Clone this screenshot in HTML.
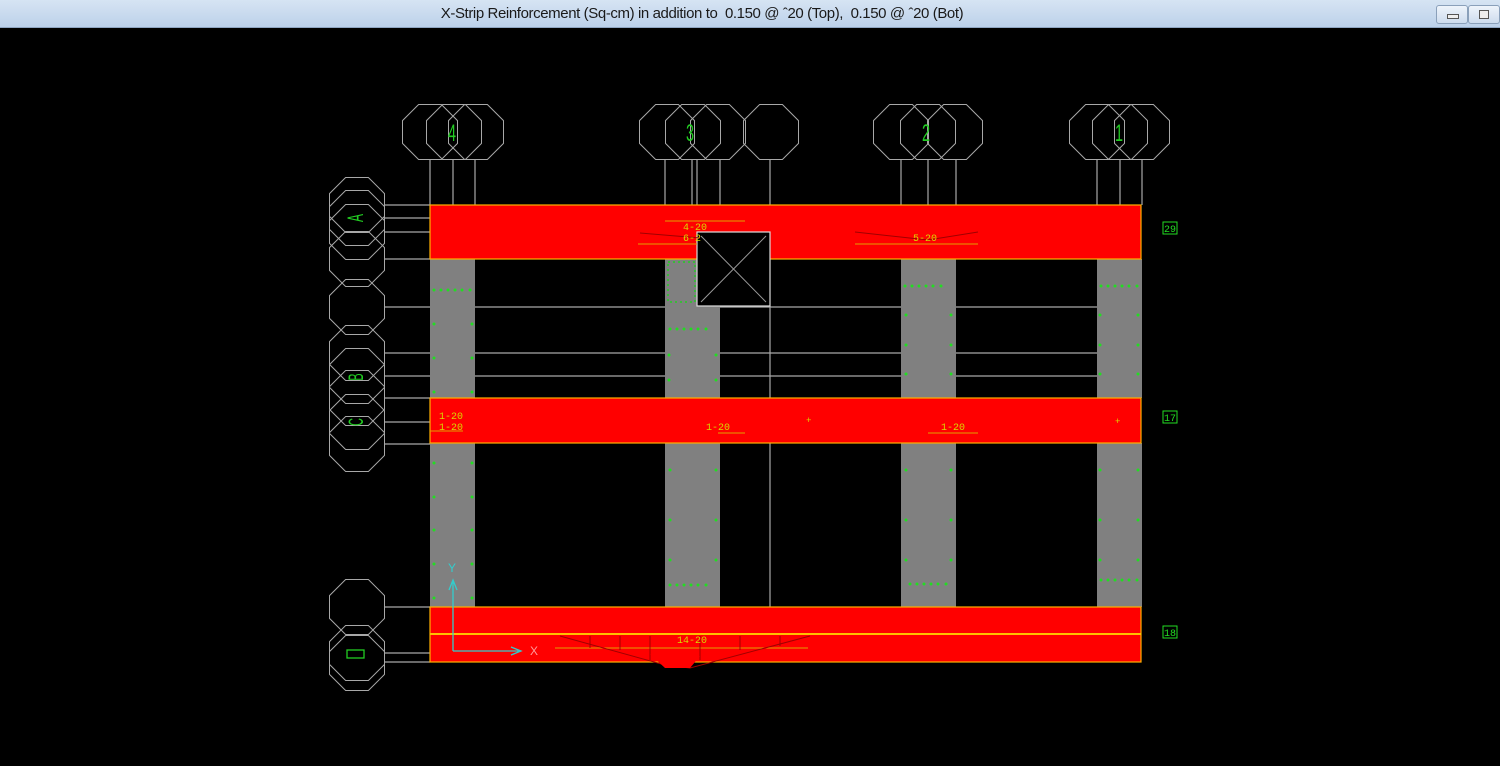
<!DOCTYPE html>
<html><head><meta charset="utf-8"><style>
html,body{margin:0;padding:0;width:1500px;height:766px;overflow:hidden;background:#000}
.tb{position:absolute;left:0;top:0;width:1500px;height:27px;background:linear-gradient(#d6e4f3,#bcd1ea);border-bottom:1px solid #8fa6c2;}
.tt{position:absolute;left:0;width:1404px;top:5px;text-align:center;font:15px "Liberation Sans",sans-serif;color:#1a1a1a;letter-spacing:-0.4px}
.bt{position:absolute;top:5px;width:30px;height:17px;border:1px solid #8aa0ba;border-radius:3px;background:linear-gradient(#eef4fb,#cddcee)}
svg{position:absolute;left:0;top:0}
</style></head><body>
<div class="tb"><div class="tt">X-Strip Reinforcement (Sq-cm) in addition to&nbsp; 0.150 @ &#x2C6;20 (Top),&nbsp; 0.150 @ &#x2C6;20 (Bot)</div>
<div class="bt" style="left:1436px"><div style="position:absolute;left:10px;top:8px;width:10px;height:3px;background:#eee;border:1px solid #555"></div></div>
<div class="bt" style="left:1468px"><div style="position:absolute;left:10px;top:4px;width:8px;height:7px;border:1px solid #555;background:#eee"></div></div>
</div>
<svg width="1500" height="766" viewBox="0 0 1500 766">
<defs><polygon id="o" points="-11.4,-27.5 11.4,-27.5 27.5,-11.4 27.5,11.4 11.4,27.5 -11.4,27.5 -27.5,11.4 -27.5,-11.4" fill="none" stroke="#a8a8a8" stroke-width="1"/></defs>
<g stroke="#a8a8a8" stroke-width="1.2" fill="none">
<path d="M430 160V205M453 160V205M475 160V205M665 160V205M692 160V205M697 160V205M720 160V205M770 160V205M901 160V205M928 160V205M956 160V205M1097 160V205M1120 160V205M1142 160V205"/>
<path d="M385 205H430M385 218H430M385 232H430M385 259H430M385 307H430M385 353H430M385 376H430M385 398H430M385 422H430M385 444H430M385 607H430M385 653H430M385 662H430"/>
<path d="M430 307H1142M430 353H1142M430 376H1142"/>
<path d="M770 306V607"/>
</g>
<g>
<use href="#o" x="430" y="132"/><use href="#o" x="454" y="132"/><use href="#o" x="476" y="132"/>
<use href="#o" x="667" y="132"/><use href="#o" x="693" y="132"/><use href="#o" x="718" y="132"/><use href="#o" x="771" y="132"/>
<use href="#o" x="901" y="132"/><use href="#o" x="928" y="132"/><use href="#o" x="955" y="132"/>
<use href="#o" x="1097" y="132"/><use href="#o" x="1120" y="132"/><use href="#o" x="1142" y="132"/>
<use href="#o" x="357" y="205"/><use href="#o" x="357" y="218"/><use href="#o" x="357" y="232"/><use href="#o" x="357" y="259"/>
<use href="#o" x="357" y="307"/><use href="#o" x="357" y="353"/><use href="#o" x="357" y="376"/><use href="#o" x="357" y="398"/><use href="#o" x="357" y="422"/><use href="#o" x="357" y="444"/>
<use href="#o" x="357" y="607"/><use href="#o" x="357" y="653"/><use href="#o" x="357" y="663"/>
</g>
<g fill="#808080">
<rect x="430" y="259" width="45" height="139"/><rect x="430" y="443" width="45" height="164"/>
<rect x="665" y="259" width="32" height="47"/><rect x="665" y="306" width="55" height="92"/><rect x="665" y="443" width="55" height="164"/>
<rect x="901" y="259" width="55" height="139"/><rect x="901" y="443" width="55" height="164"/>
<rect x="1097" y="259" width="45" height="139"/><rect x="1097" y="443" width="45" height="164"/>
</g>
<g fill="#ff0000" stroke="#ffb000" stroke-width="1.2">
<rect x="430" y="205" width="711" height="54"/>
<rect x="430" y="398" width="711" height="45"/>
<rect x="430" y="607" width="711" height="55"/>
</g>
<path d="M430 634H1141" stroke="#ffc000" stroke-width="2"/>
<rect x="697" y="232" width="73" height="74" fill="#000" stroke="#ddd" stroke-width="1.2"/>
<path d="M701 236L766 302M766 236L701 302" stroke="#999"/>
<rect x="668" y="262" width="27" height="40" fill="none" stroke="#2c2" stroke-dasharray="2,3" stroke-width="1.5"/>
<g stroke="#e0a000" stroke-width="1">
<path d="M665 221H745M638 244H697M855 244H978M555 648H808M430 431H463M718 433H745M928 433H978"/>
</g>
<g fill="none" stroke="#a00000" stroke-width="1">
<path d="M640 233L700 238M855 232L928 240L978 232"/>
<path d="M560 636L665 665L690 668L810 636"/>
<path d="M590 636V648M620 636V650M650 636V660M700 636V660M740 636V650M780 636V646"/>
</g>
<path d="M650 654L665 668L690 668L700 656Z" fill="#ff0000"/>
<g fill="#2d2">
<g id="d1"><circle cx="434" cy="290" r="1.5"/><circle cx="441" cy="290" r="1.5"/><circle cx="448" cy="290" r="1.5"/><circle cx="455" cy="290" r="1.5"/><circle cx="462" cy="290" r="1.5"/><circle cx="470" cy="290" r="1.5"/></g>
<use href="#d1" x="236" y="39"/><use href="#d1" x="471" y="-4"/><use href="#d1" x="476" y="294"/><use href="#d1" x="236" y="295"/><use href="#d1" x="667" y="-4"/><use href="#d1" x="667" y="290"/>
<circle cx="434" cy="324" r="1.5"/><circle cx="472" cy="324" r="1.5"/><circle cx="434" cy="358" r="1.5"/><circle cx="472" cy="358" r="1.5"/><circle cx="434" cy="392" r="1.5"/><circle cx="472" cy="392" r="1.5"/>
<circle cx="669" cy="355" r="1.5"/><circle cx="716" cy="355" r="1.5"/><circle cx="669" cy="380" r="1.5"/><circle cx="716" cy="380" r="1.5"/>
<circle cx="906" cy="315" r="1.5"/><circle cx="951" cy="315" r="1.5"/><circle cx="906" cy="345" r="1.5"/><circle cx="951" cy="345" r="1.5"/><circle cx="906" cy="374" r="1.5"/><circle cx="951" cy="374" r="1.5"/>
<circle cx="1100" cy="315" r="1.5"/><circle cx="1138" cy="315" r="1.5"/><circle cx="1100" cy="345" r="1.5"/><circle cx="1138" cy="345" r="1.5"/><circle cx="1100" cy="374" r="1.5"/><circle cx="1138" cy="374" r="1.5"/>
<circle cx="434" cy="463" r="1.5"/><circle cx="472" cy="463" r="1.5"/><circle cx="434" cy="497" r="1.5"/><circle cx="472" cy="497" r="1.5"/><circle cx="434" cy="530" r="1.5"/><circle cx="472" cy="530" r="1.5"/><circle cx="434" cy="564" r="1.5"/><circle cx="472" cy="564" r="1.5"/><circle cx="434" cy="598" r="1.5"/><circle cx="472" cy="598" r="1.5"/>
<circle cx="670" cy="470" r="1.5"/><circle cx="716" cy="470" r="1.5"/><circle cx="670" cy="520" r="1.5"/><circle cx="716" cy="520" r="1.5"/><circle cx="670" cy="560" r="1.5"/><circle cx="716" cy="560" r="1.5"/>
<circle cx="906" cy="470" r="1.5"/><circle cx="951" cy="470" r="1.5"/><circle cx="906" cy="520" r="1.5"/><circle cx="951" cy="520" r="1.5"/><circle cx="906" cy="560" r="1.5"/><circle cx="951" cy="560" r="1.5"/>
<circle cx="1100" cy="470" r="1.5"/><circle cx="1138" cy="470" r="1.5"/><circle cx="1100" cy="520" r="1.5"/><circle cx="1138" cy="520" r="1.5"/><circle cx="1100" cy="560" r="1.5"/><circle cx="1138" cy="560" r="1.5"/>
</g>
<g font-family="Liberation Mono,monospace" fill="#d8d800" font-size="10">
<text x="683" y="230">4-20</text><text x="683" y="241">6-2</text>
<text x="913" y="241">5-20</text>
<text x="439" y="419">1-20</text><text x="439" y="430">1-20</text>
<text x="706" y="430">1-20</text><text x="941" y="430">1-20</text>
<text x="677" y="643">14-20</text>
<text x="806" y="423" font-size="9">+</text><text x="1115" y="424" font-size="9">+</text>
</g>
<g font-family="Liberation Sans,sans-serif" fill="#22cc22" font-size="24" text-anchor="middle">
<text transform="translate(452,141) scale(0.6,1)">4</text>
<text transform="translate(690,141) scale(0.6,1)">3</text>
<text transform="translate(926,141) scale(0.6,1)">2</text>
<text transform="translate(1119,141) scale(0.6,1)">1</text>
<text transform="translate(363,218) rotate(-90) scale(0.6,1.1)" font-size="20">A</text>
<text transform="translate(363,377) rotate(-90) scale(0.6,1.2)" font-size="18">B</text>
<text transform="translate(363,422) rotate(-90) scale(0.6,1.2)" font-size="18">C</text>
</g>
<rect x="347" y="650" width="17" height="8" fill="none" stroke="#22cc22" stroke-width="1.3"/>
<g font-family="Liberation Mono,monospace" fill="#22dd22" font-size="10">
<rect x="1163" y="222" width="14" height="12" fill="none" stroke="#2d2"/><text x="1164" y="232">29</text>
<rect x="1163" y="411" width="14" height="12" fill="none" stroke="#2d2"/><text x="1164" y="421">17</text>
<rect x="1163" y="626" width="14" height="12" fill="none" stroke="#2d2"/><text x="1164" y="636">18</text>
</g>
<g stroke="#33cccc" stroke-width="1.3" fill="none">
<path d="M453 651V582M449 590L453 580L457 590M453 651H520M511 647L521 651L511 655"/>
</g>
<text x="448" y="572" font-family="Liberation Sans,sans-serif" fill="#33cccc" font-size="12">Y</text>
<text x="530" y="655" font-family="Liberation Sans,sans-serif" fill="#ff9999" font-size="12">X</text>
</svg>
</body></html>
